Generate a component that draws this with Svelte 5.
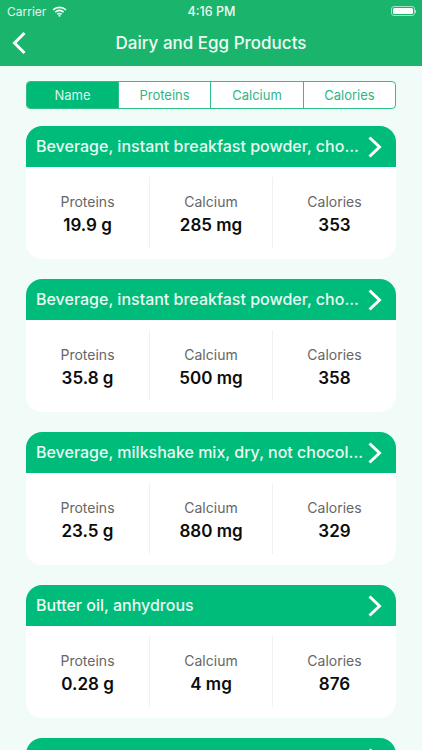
<script>
  const tabs = ['Name', 'Proteins', 'Calcium', 'Calories'];
  const items = [
    { name: 'Beverage, instant breakfast powder, cho...', p: '19.9 g', c: '285 mg', k: '353' },
    { name: 'Beverage, instant breakfast powder, cho...', p: '35.8 g', c: '500 mg', k: '358' },
    { name: 'Beverage, milkshake mix, dry, not chocol...', p: '23.5 g', c: '880 mg', k: '329' },
    { name: 'Butter oil, anhydrous', p: '0.28 g', c: '4 mg', k: '876' }
  ];
</script>

<div class="page">
  <header class="nav">
    <div class="status">
      <div class="carrier">
        <span>Carrier</span>
        <svg class="wifi" width="15" height="11" viewBox="0 0 16 12">
          <path d="M1 4.2C5 .6 11 .6 15 4.2" />
          <path d="M3.4 6.7c2.7-2.3 6.5-2.3 9.2 0" />
          <path d="M5.7 9c1.4-1 3.2-1 4.600 0" />
          <circle cx="8" cy="10.600" r="1.100" />
        </svg>
      </div>
      <span class="time">4:16 PM</span>
      <div class="battery-wrap">
        <div class="battery"><i></i></div>
        <span class="nub"></span>
      </div>
    </div>
    <div class="titlebar">
      <svg class="back" width="16" height="26" viewBox="0 0 16 26">
        <path d="M13.500 3 3.500 13l10 10" />
      </svg>
      <h1>Dairy and Egg Products</h1>
    </div>
  </header>

  <main>
    <div class="tabs">
      {#each tabs as t, i}
        <div class="tab" class:on={i === 0}>{t}</div>
      {/each}
    </div>

    {#each items as it}
      <section class="card">
        <div class="head">
          <span class="name">{it.name}</span>
          <svg class="chev" width="16" height="24" viewBox="0 0 16 24">
            <path d="M2.500 2.500 12.500 12 2.500 21.500" />
          </svg>
        </div>
        <div class="body">
          <div class="col"><span class="lab">Proteins</span><b>{it.p}</b></div>
          <div class="col"><span class="lab">Calcium</span><b>{it.c}</b></div>
          <div class="col"><span class="lab">Calories</span><b>{it.k}</b></div>
        </div>
      </section>
    {/each}

    <section class="card">
      <div class="head">
        <span class="name"></span>
        <svg class="chev" width="16" height="24" viewBox="0 0 16 24">
          <path d="M2.500 2.500 12.500 12 2.500 21.500" />
        </svg>
      </div>
    </section>
  </main>
</div>

<style>
  :global(body) { margin: 0; }
  .page {
    width: 422px;
    height: 750px;
    overflow: hidden;
    background: #f1fcf8;
    font-family: Inter, "Liberation Sans", sans-serif;
  }
  .nav { background: #1bb46c; height: 66px; color: #fff; }
  .status {
    height: 22px;
    padding: 0 6px 0 7px;
    display: grid;
    grid-template-columns: 1fr auto 1fr;
    align-items: center;
    font-size: 12px;
  }
  .carrier { display: flex; align-items: center; gap: 6px; color: #e4f6ec; }
  .wifi { fill: #fff; }
  .wifi path { fill: none; stroke: #fff; stroke-width: 1.700; }
  .time { font-weight: 500; font-size: 12.500px; color: #eefaf4; }
  .battery-wrap { justify-self: end; display: flex; align-items: center; }
  .battery {
    width: 24px;
    height: 10px;
    box-sizing: border-box;
    border: 1px solid #a5e0c2;
    border-radius: 3px;
    padding: 1px;
    display: flex;
  }
  .battery i { flex: 1; background: #fff; border-radius: 1.500px; }
  .nub { width: 1px; height: 3px; background: #a5e0c2; }
  .titlebar {
    height: 42px;
    position: relative;
    display: flex;
    align-items: center;
    justify-content: center;
  }
  .back { position: absolute; left: 11px; top: 8px; }
  .back path, .chev path { fill: none; stroke: #fff; stroke-width: 3; }
  h1 { margin: 0; font-size: 17px; font-weight: 500; color: #eefaf4; }
  main { padding: 15px 26px 0; }
  .tabs {
    display: grid;
    grid-template-columns: 91px 92px 93px 1fr;
    height: 28px;
    border: 1px solid #2fc08a;
    border-radius: 4px;
    box-sizing: border-box;
    overflow: hidden;
    background: #fff;
    margin-bottom: 17px;
  }
  .tab {
    display: flex;
    align-items: center;
    justify-content: center;
    font-size: 13px;
    color: #2fb584;
    border-left: 1px solid #2fc08a;
  }
  .tab:first-child { border-left: 0; }
  .tab.on { background: #00ba78; color: #dff6ec; }
  .card {
    margin-bottom: 20px;
    border-radius: 16px;
    overflow: hidden;
    background: #fff;
  }
  .head {
    height: 41px;
    box-sizing: border-box;
    background: #00bc7b;
    display: flex;
    align-items: center;
    padding: 0 13px 0 10px;
    gap: 7px;
    color: #e9f9f1;
  }
  .name {
    flex: 1;
    min-width: 0;
    font-size: 16px;
    font-weight: 500;
    white-space: nowrap;
    padding-bottom: 1px;
  }
  .chev { flex: none; }
  .body {
    height: 92px;
    box-sizing: border-box;
    padding: 10px 0 11px;
    display: grid;
    grid-template-columns: 123px 123px 1fr;
  }
  .col {
    display: flex;
    flex-direction: column;
    align-items: center;
    justify-content: center;
    gap: 3px;
    padding-top: 4px;
    border-left: 1px solid #f0f2f1;
  }
  .col:first-child { border-left: 0; }
  .lab { font-size: 14px; color: #666; line-height: 18px; }
  b { font-size: 17px; font-weight: 600; color: #0c0c0c; line-height: 22px; }
</style>
